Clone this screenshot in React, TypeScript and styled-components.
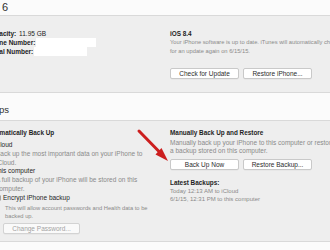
import React from 'react'
import styled, { createGlobalStyle } from 'styled-components'

const GlobalStyle = createGlobalStyle`
  html, body {
    margin: 0;
    padding: 0;
  }

  body {
    background: #eeeeee;
    font-family: 'Liberation Sans', Arial, sans-serif;
  }
`

const Screen = styled.div`
  position: relative;
  width: 330px;
  height: 250px;
  overflow: hidden;
  background: #eeeeee;
  color: #222;
`

const SectionHeader = styled.div<{ $height: number; $pad: number }>`
  display: flex;
  align-items: flex-end;
  box-sizing: border-box;
  height: ${p => p.$height}px;
  padding-bottom: ${p => p.$pad}px;
  background: #fbfbfb;
  border-bottom: 1px solid #d9d9d9;
`

const HeaderTitle = styled.span<{ $shift: number; $size: number }>`
  margin-left: ${p => p.$shift}px;
  font-size: ${p => p.$size}px;
  line-height: 11px;
  color: #303030;
  white-space: nowrap;
`

const Body = styled.div<{ $top: number; $bottom: number }>`
  display: grid;
  grid-template-columns: 183px 1fr;
  margin-left: -13px;
  padding: ${p => p.$top}px 0 ${p => p.$bottom}px;
  border-bottom: 1px solid #d9d9d9;
`

const Column = styled.div`
  display: flex;
  flex-direction: column;
  align-items: flex-start;
  min-width: 0;
`

const Heading = styled.div<{ $lh?: number; $mt?: number; $ml?: number }>`
  margin-top: ${p => p.$mt ?? 0}px;
  margin-left: ${p => p.$ml ?? 0}px;
  font-size: 6.4px;
  font-weight: bold;
  line-height: ${p => p.$lh ?? 8}px;
  color: #1e1e1e;
  white-space: nowrap;
`

const Note = styled.div<{ $size?: number; $lh?: number; $mt?: number }>`
  margin-top: ${p => p.$mt ?? 0}px;
  font-size: ${p => p.$size ?? 6.5}px;
  line-height: ${p => p.$lh ?? 8}px;
  color: #8a8a8a;
  white-space: nowrap;
`

const InfoRow = styled.div`
  display: flex;
  align-items: center;
  height: 9px;
  font-size: 6.5px;
  line-height: 9px;
  white-space: nowrap;
`

const InfoLabel = styled.span`
  font-weight: bold;
  margin-right: 1px;
`

const Redacted = styled.span<{ $width: number }>`
  display: inline-block;
  width: ${p => p.$width}px;
  height: 9px;
  background: #ffffff;
`

const ButtonRow = styled.div<{ $mt: number }>`
  display: flex;
  gap: 4px;
  margin-top: ${p => p.$mt}px;
`

const Button = styled.button<{ $width: number; $ml?: number }>`
  box-sizing: border-box;
  width: ${p => p.$width}px;
  height: 11px;
  margin-left: ${p => p.$ml ?? 0}px;
  padding: 0;
  font-family: inherit;
  font-size: 6.5px;
  line-height: 9px;
  color: #2b2b2b;
  background: #ffffff;
  border: 1px solid #c9c9c9;
  border-radius: 2px;
  box-shadow: 0 0.5px 0 rgba(0, 0, 0, 0.06);

  &:disabled {
    color: #a3a3a3;
    background: #fafafa;
    border-color: #d3d3d3;
  }
`

const Choice = styled.div<{ $mt?: number }>`
  display: flex;
  align-items: center;
  gap: 0;
  margin-top: ${p => p.$mt ?? 0}px;
  font-size: 6.5px;
  line-height: 8px;
  color: #1e1e1e;
  white-space: nowrap;
`

const Radio = styled.span<{ $on?: boolean }>`
  box-sizing: border-box;
  width: 7px;
  height: 7px;
  border-radius: 50%;
  border: 1px solid ${p => (p.$on ? '#3b86f0' : '#a9a9a9')};
  background: ${p => (p.$on ? 'radial-gradient(circle, #fff 0 1.2px, #4a92f5 1.4px)' : '#fff')};
`

const Indent = styled.div`
  display: flex;
  flex-direction: column;
  align-items: flex-start;
  padding-left: 9px;
`

const CheckRow = styled(Choice)`
  gap: 2px;
  margin-left: -1px;
`

const CheckBox = styled.span`
  box-sizing: border-box;
  width: 6px;
  height: 6px;
  border: 1px solid #a5a5a5;
  border-radius: 1px;
  background: #fff;
`

const SmallNote = styled(Note)`
  padding-left: 9px;
`

const Arrow = styled.svg`
  position: absolute;
  left: 134px;
  top: 126px;
  width: 38px;
  height: 40px;
  overflow: visible;
`

const App = () => {
  return (
    <Screen>
      <GlobalStyle />

      <SectionHeader $height={16} $pad={2}>
        <HeaderTitle $shift={-35.3} $size={11}>iPhone 6</HeaderTitle>
      </SectionHeader>

      <Body $top={13} $bottom={13}>
        <Column>
          <InfoRow>
            <InfoLabel>Capacity:</InfoLabel>&nbsp;11.95 GB
          </InfoRow>
          <InfoRow>
            <InfoLabel>Phone Number:</InfoLabel>
            <Redacted $width={60} />
          </InfoRow>
          <InfoRow>
            <InfoLabel>Serial Number:</InfoLabel>
            <Redacted $width={53} />
          </InfoRow>
        </Column>
        <Column>
          <Heading $lh={9}>iOS 8.4</Heading>
          <Note $size={5.75} $lh={9}>
            Your iPhone software is up to date. iTunes will automatically check
            <br />
            for an update again on 6/15/15.
          </Note>
          <ButtonRow $mt={12}>
            <Button $width={69}>Check for Update</Button>
            <Button $width={69}>Restore iPhone...</Button>
          </ButtonRow>
        </Column>
      </Body>

      <SectionHeader $height={28} $pad={5}>
        <HeaderTitle $shift={-27.4} $size={9.5}>Backups</HeaderTitle>
      </SectionHeader>

      <Body $top={8} $bottom={7}>
        <Column>
          <Heading $ml={-2}>Automatically Back Up</Heading>
          <Choice $mt={4}>
            <Radio $on />
            iCloud
          </Choice>
          <Indent>
            <Note $lh={8.5} $mt={1}>
              Back up the most important data on your iPhone to
              <br />
              iCloud.
            </Note>
          </Indent>
          <Choice>
            <Radio />
            This computer
          </Choice>
          <Indent>
            <Note $lh={8.5} $mt={1}>
              A full backup of your iPhone will be stored on this
              <br />
              computer.
            </Note>
            <CheckRow $mt={1}>
              <CheckBox />
              Encrypt iPhone backup
            </CheckRow>
            <SmallNote $size={5.75} $mt={2}>
              This will allow account passwords and Health data to be
              <br />
              backed up.
            </SmallNote>
            <ButtonRow $mt={3}>
              <Button $width={77} $ml={7} disabled>
                Change Password...
              </Button>
            </ButtonRow>
          </Indent>
        </Column>
        <Column>
          <Heading>Manually Back Up and Restore</Heading>
          <Note $mt={2}>
            Manually back up your iPhone to this computer or restore
            <br />
            a backup stored on this computer.
          </Note>
          <ButtonRow $mt={4}>
            <Button $width={69}>Back Up Now</Button>
            <Button $width={69}>Restore Backup...</Button>
          </ButtonRow>
          <Heading $mt={9}>Latest Backups:</Heading>
          <Note $size={6}>
            Today 12:13 AM to iCloud
            <br />
            6/1/15, 12:31 PM to this computer
          </Note>
        </Column>
      </Body>

      <SectionHeader $height={20} $pad={0} />

      <Arrow viewBox="0 0 38 40">
        <line x1="5" y1="5" x2="25" y2="25.5" stroke="#cc1f1f" strokeWidth="3" strokeLinecap="round" />
        <polygon points="34,35 21.5,28.5 27.5,22" fill="#cc1f1f" />
      </Arrow>
    </Screen>
  )
}

export default App
